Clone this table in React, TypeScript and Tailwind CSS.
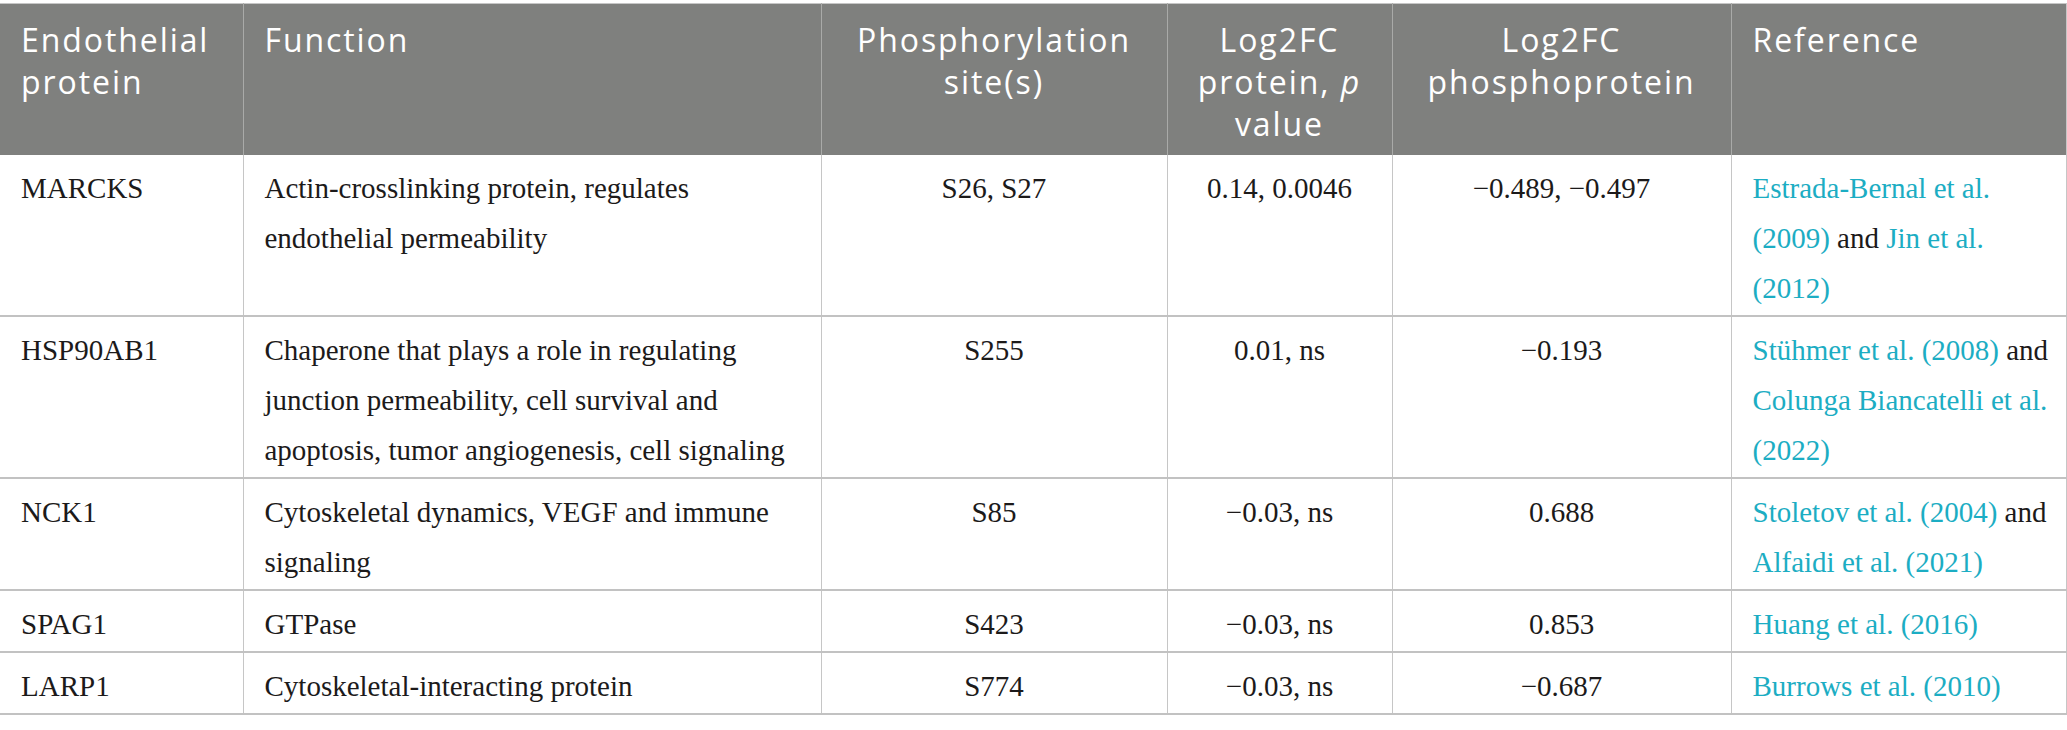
import React from "react";

type Cell = React.ReactNode;

interface Row {
  protein: string;
  func: string[];
  sites: string;
  protLog: string;
  phosLog: string;
  refs: Cell;
}

const Ref = ({ children }: { children: React.ReactNode }) => (
  <span className="text-[#1cadc3]">{children}</span>
);

const rows: Row[] = [
  {
    protein: "MARCKS",
    func: ["Actin-crosslinking protein, regulates", "endothelial permeability"],
    sites: "S26, S27",
    protLog: "0.14, 0.0046",
    phosLog: "\u22120.489, \u22120.497",
    refs: (
      <>
        <Ref>Estrada-Bernal et al.</Ref>
        <br />
        <Ref>(2009)</Ref> and <Ref>Jin et al.</Ref>
        <br />
        <Ref>(2012)</Ref>
      </>
    ),
  },
  {
    protein: "HSP90AB1",
    func: [
      "Chaperone that plays a role in regulating",
      "junction permeability, cell survival and",
      "apoptosis, tumor angiogenesis, cell signaling",
    ],
    sites: "S255",
    protLog: "0.01, ns",
    phosLog: "\u22120.193",
    refs: (
      <>
        <Ref>Stühmer et al. (2008)</Ref> and
        <br />
        <Ref>Colunga Biancatelli et al.</Ref>
        <br />
        <Ref>(2022)</Ref>
      </>
    ),
  },
  {
    protein: "NCK1",
    func: ["Cytoskeletal dynamics, VEGF and immune", "signaling"],
    sites: "S85",
    protLog: "\u22120.03, ns",
    phosLog: "0.688",
    refs: (
      <>
        <Ref>Stoletov et al. (2004)</Ref> and
        <br />
        <Ref>Alfaidi et al. (2021)</Ref>
      </>
    ),
  },
  {
    protein: "SPAG1",
    func: ["GTPase"],
    sites: "S423",
    protLog: "\u22120.03, ns",
    phosLog: "0.853",
    refs: <Ref>Huang et al. (2016)</Ref>,
  },
  {
    protein: "LARP1",
    func: ["Cytoskeletal-interacting protein"],
    sites: "S774",
    protLog: "\u22120.03, ns",
    phosLog: "\u22120.687",
    refs: <Ref>Burrows et al. (2010)</Ref>,
  },
];

const th =
  "align-top px-[21px] pt-[15px] pb-[10px] font-normal text-white border-l border-[#a9aaa8] first:border-l-0";
const td =
  "align-top px-[21px] pt-[8px] pb-[2px] border-l border-[#c6c6c6] first:border-l-0 whitespace-nowrap";

export default function App() {
  return (
    <div className="w-[2067px] bg-white pt-[3px]">
      <table className="w-[2067px] table-fixed border-collapse border-t border-r border-[#c6c6c6]">
        <colgroup>
          <col className="w-[243px]" />
          <col className="w-[578px]" />
          <col className="w-[346px]" />
          <col className="w-[225px]" />
          <col className="w-[339px]" />
          <col />
        </colgroup>
        <thead>
          <tr className="bg-[#7f807e] font-['Open_Sans',sans-serif] text-[32px] leading-[42px] tracking-[0.06em]">
            <th className={`${th} text-left`}>
              Endothelial
              <br />
              protein
            </th>
            <th className={`${th} text-left`}>Function</th>
            <th className={`${th} text-center`}>
              Phosphorylation
              <br />
              site(s)
            </th>
            <th className={`${th} text-center`}>
              Log2FC
              <br />
              protein, <i>p</i>
              <br />
              value
            </th>
            <th className={`${th} text-center`}>
              Log2FC
              <br />
              phosphoprotein
            </th>
            <th className={`${th} text-left`}>Reference</th>
          </tr>
        </thead>
        <tbody className="font-['Liberation_Serif',serif] text-[29px] leading-[50px] text-[#1c1a1a]">
          {rows.map((r) => (
            <tr key={r.protein} className="border-b-2 border-[#c2c2c2]">
              <td className={`${td} text-left`}>{r.protein}</td>
              <td className={`${td} text-left`}>
                {r.func.map((line, i) => (
                  <React.Fragment key={i}>
                    {i > 0 && <br />}
                    {line}
                  </React.Fragment>
                ))}
              </td>
              <td className={`${td} text-center`}>{r.sites}</td>
              <td className={`${td} text-center`}>{r.protLog}</td>
              <td className={`${td} text-center`}>{r.phosLog}</td>
              <td className={`${td} text-left`}>{r.refs}</td>
            </tr>
          ))}
        </tbody>
      </table>
    </div>
  );
}
